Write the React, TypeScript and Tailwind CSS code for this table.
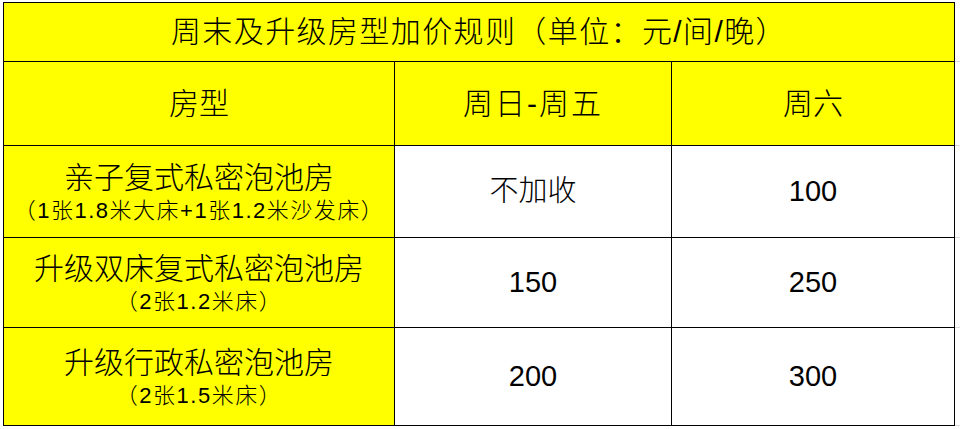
import React from 'react';

const rows = [
  { name: '亲子复式私密泡池房', note: '（1张1.8米大床+1张1.2米沙发床）', weekday: '不加收', sat: '100', h: 'h-[92px]' },
  { name: '升级双床复式私密泡池房', note: '（2张1.2米床）', weekday: '150', sat: '250', h: 'h-[90px]' },
  { name: '升级行政私密泡池房', note: '（2张1.5米床）', weekday: '200', sat: '300', h: 'h-[98px]' },
];

const Gutter: React.FC = () => (
  <div className="w-[5px] flex flex-col justify-end">
    <div className="h-px bg-[#dcdcdc]" />
  </div>
);

const App: React.FC = () => {
  return (
    <div
      className="w-[960px] h-[429px] bg-white pt-[2px] pl-[3px] text-black font-light overflow-hidden"
      style={{ fontFamily: '"Liberation Sans", "Noto Sans CJK SC", sans-serif' }}
    >
      {/* title */}
      <div className="flex">
        <div className="w-[952px] h-[60px] flex items-center justify-center border border-black bg-[#ffff00] text-[30px] tracking-[1.4px] leading-none">
          周末及升级房型加价规则（单位：元/间/晚）
        </div>
        <Gutter />
      </div>

      {/* header */}
      <div className="flex">
        <div className="w-[952px] h-[84px] flex border-l border-r border-b border-black bg-[#ffff00] text-[30px]">
          <div className="w-[391px] flex items-center justify-center border-r border-black">房型</div>
          <div className="w-[277px] flex items-center justify-center border-r border-black tracking-[2px]">周日-周五</div>
          <div className="flex-1 flex items-center justify-center">周六</div>
        </div>
        <Gutter />
      </div>

      {rows.map((r) => (
        <div className="flex" key={r.name}>
          <div className={`w-[952px] ${r.h} flex border-l border-r border-b border-black`}>
            <div className="w-[391px] flex flex-col items-center justify-center border-r border-black bg-[#ffff00] pt-[2px]">
              <div className="text-[30px] leading-[36px]">{r.name}</div>
              <div className="text-[22px] leading-[30px] tracking-[1.5px]">{r.note}</div>
            </div>
            <div className="w-[277px] flex items-center justify-center border-r border-black bg-white text-[29px]">
              {r.weekday}
            </div>
            <div className="flex-1 flex items-center justify-center bg-white text-[29px]">{r.sat}</div>
          </div>
          <Gutter />
        </div>
      ))}
    </div>
  );
};

export default App;
